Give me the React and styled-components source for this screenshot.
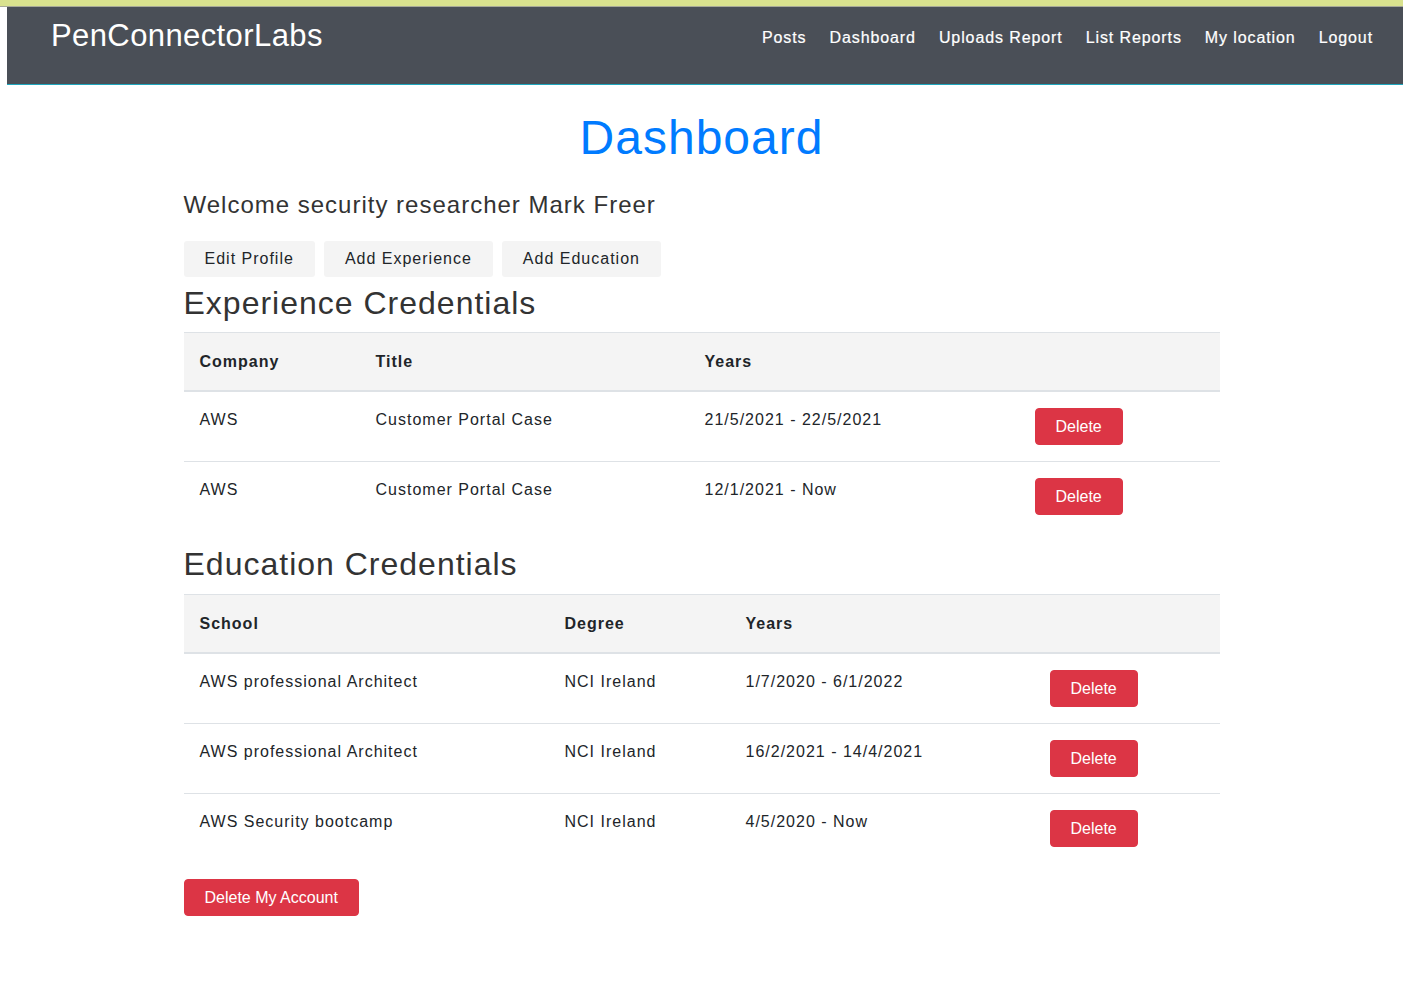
import styled, { createGlobalStyle } from 'styled-components';

const GlobalStyle = createGlobalStyle`
  body {
    margin: 0;
    background: #fff;
    font-family: "Liberation Sans", Arial, sans-serif;
    color: #212529;
    letter-spacing: 1px;
  }
`;

const TopStrip = styled.div`
  height: 6px;
  background: #d9e28e;
  border-bottom: 1px solid #a8aa98;
`;

const Navbar = styled.nav`
  margin-left: 7px;
  height: 78px;
  box-sizing: border-box;
  background: #4a4f57;
  border-bottom: 1px solid #1fa6bd;
  display: flex;
  align-items: flex-start;
  justify-content: space-between;
  padding: 10px 30px 0 44px;
`;

const Logo = styled.a`
  color: #fff;
  font-size: 31px;
  line-height: 37px;
  letter-spacing: 0.4px;
  text-decoration: none;
`;

const NavLinks = styled.div`
  display: flex;
  gap: 23px;
  margin-top: 9px;
`;

const NavLink = styled.a`
  color: #fff;
  font-size: 16px;
  line-height: 24px;
  letter-spacing: 0.9px;
  text-decoration: none;
  -webkit-text-stroke: 0.2px #fff;
`;

const Main = styled.main`
  width: 1036px;
  margin: 0 auto;
  display: flex;
  flex-direction: column;
  align-items: flex-start;
`;

const PageTitle = styled.h1`
  align-self: center;
  margin: 24px 0 0;
  font-size: 48px;
  line-height: 58px;
  font-weight: normal;
  color: #007bff;
`;

const Welcome = styled.p`
  margin: 23px 0 0;
  font-size: 24px;
  line-height: 29px;
  color: #333;
`;

const ActionRow = styled.div`
  display: flex;
  gap: 9px;
  margin-top: 22px;
`;

const LightButton = styled.button`
  font-family: inherit;
  font-size: 16px;
  letter-spacing: 1px;
  line-height: 24px;
  padding: 6px 21px;
  border: none;
  border-radius: 3px;
  background: #f4f4f4;
  color: #212529;
  cursor: pointer;
`;

const SectionTitle = styled.h2`
  margin: ${(p) => p.$top}px 0 0;
  font-size: 32px;
  line-height: 38px;
  font-weight: normal;
  color: #333;
`;

const Table = styled.table`
  width: 100%;
  margin-top: ${(p) => p.$top}px;
  border-collapse: collapse;
  table-layout: fixed;
  font-size: 16px;
  line-height: 24px;
`;

const HeadCell = styled.th`
  box-sizing: border-box;
  width: ${(p) => (p.$w ? `${p.$w}px` : 'auto')};
  text-align: left;
  padding: 17px 16px 16px;
  background: #f4f4f4;
  border-top: 1px solid #dee2e6;
  border-bottom: 2px solid #dee2e6;
  font-weight: bold;
`;

const Row = styled.tr`
  & + & td {
    border-top: 1px solid #dee2e6;
  }
`;

const Cell = styled.td`
  box-sizing: border-box;
  vertical-align: top;
  padding: 16px;
`;

const DangerButton = styled.button`
  font-family: "Liberation Sans", Arial, sans-serif;
  font-size: 16px;
  letter-spacing: 0;
  line-height: 23px;
  padding: 6px 20px;
  border: 1px solid #dc3545;
  border-radius: 4px;
  background: #dc3545;
  color: #fff;
  cursor: pointer;
`;

const AccountButton = styled(DangerButton)`
  margin-top: 16px;
`;

const experience = [
  { company: 'AWS', title: 'Customer Portal Case', years: '21/5/2021 - 22/5/2021' },
  { company: 'AWS', title: 'Customer Portal Case', years: '12/1/2021 - Now' },
];

const education = [
  { school: 'AWS professional Architect', degree: 'NCI Ireland', years: '1/7/2020 - 6/1/2022' },
  { school: 'AWS professional Architect', degree: 'NCI Ireland', years: '16/2/2021 - 14/4/2021' },
  { school: 'AWS Security bootcamp', degree: 'NCI Ireland', years: '4/5/2020 - Now' },
];

const links = ['Posts', 'Dashboard', 'Uploads Report', 'List Reports', 'My location', 'Logout'];

export default function App() {
  return (
    <>
      <GlobalStyle />
      <TopStrip />
      <Navbar>
        <Logo href="#">PenConnectorLabs</Logo>
        <NavLinks>
          {links.map((l) => (
            <NavLink key={l} href="#">
              {l}
            </NavLink>
          ))}
        </NavLinks>
      </Navbar>
      <Main>
        <PageTitle>Dashboard</PageTitle>
        <Welcome>Welcome security researcher Mark Freer</Welcome>
        <ActionRow>
          <LightButton>Edit Profile</LightButton>
          <LightButton>Add Experience</LightButton>
          <LightButton>Add Education</LightButton>
        </ActionRow>

        <SectionTitle $top={7}>Experience Credentials</SectionTitle>
        <Table $top={10}>
          <thead>
            <tr>
              <HeadCell $w={176}>Company</HeadCell>
              <HeadCell $w={329}>Title</HeadCell>
              <HeadCell $w={330}>Years</HeadCell>
              <HeadCell />
            </tr>
          </thead>
          <tbody>
            {experience.map((e, i) => (
              <Row key={i}>
                <Cell>{e.company}</Cell>
                <Cell>{e.title}</Cell>
                <Cell>{e.years}</Cell>
                <Cell>
                  <DangerButton>Delete</DangerButton>
                </Cell>
              </Row>
            ))}
          </tbody>
        </Table>

        <SectionTitle $top={14}>Education Credentials</SectionTitle>
        <Table $top={11}>
          <thead>
            <tr>
              <HeadCell $w={365}>School</HeadCell>
              <HeadCell $w={181}>Degree</HeadCell>
              <HeadCell $w={304}>Years</HeadCell>
              <HeadCell />
            </tr>
          </thead>
          <tbody>
            {education.map((e, i) => (
              <Row key={i}>
                <Cell>{e.school}</Cell>
                <Cell>{e.degree}</Cell>
                <Cell>{e.years}</Cell>
                <Cell>
                  <DangerButton>Delete</DangerButton>
                </Cell>
              </Row>
            ))}
          </tbody>
        </Table>

        <AccountButton>Delete My Account</AccountButton>
      </Main>
    </>
  );
}
